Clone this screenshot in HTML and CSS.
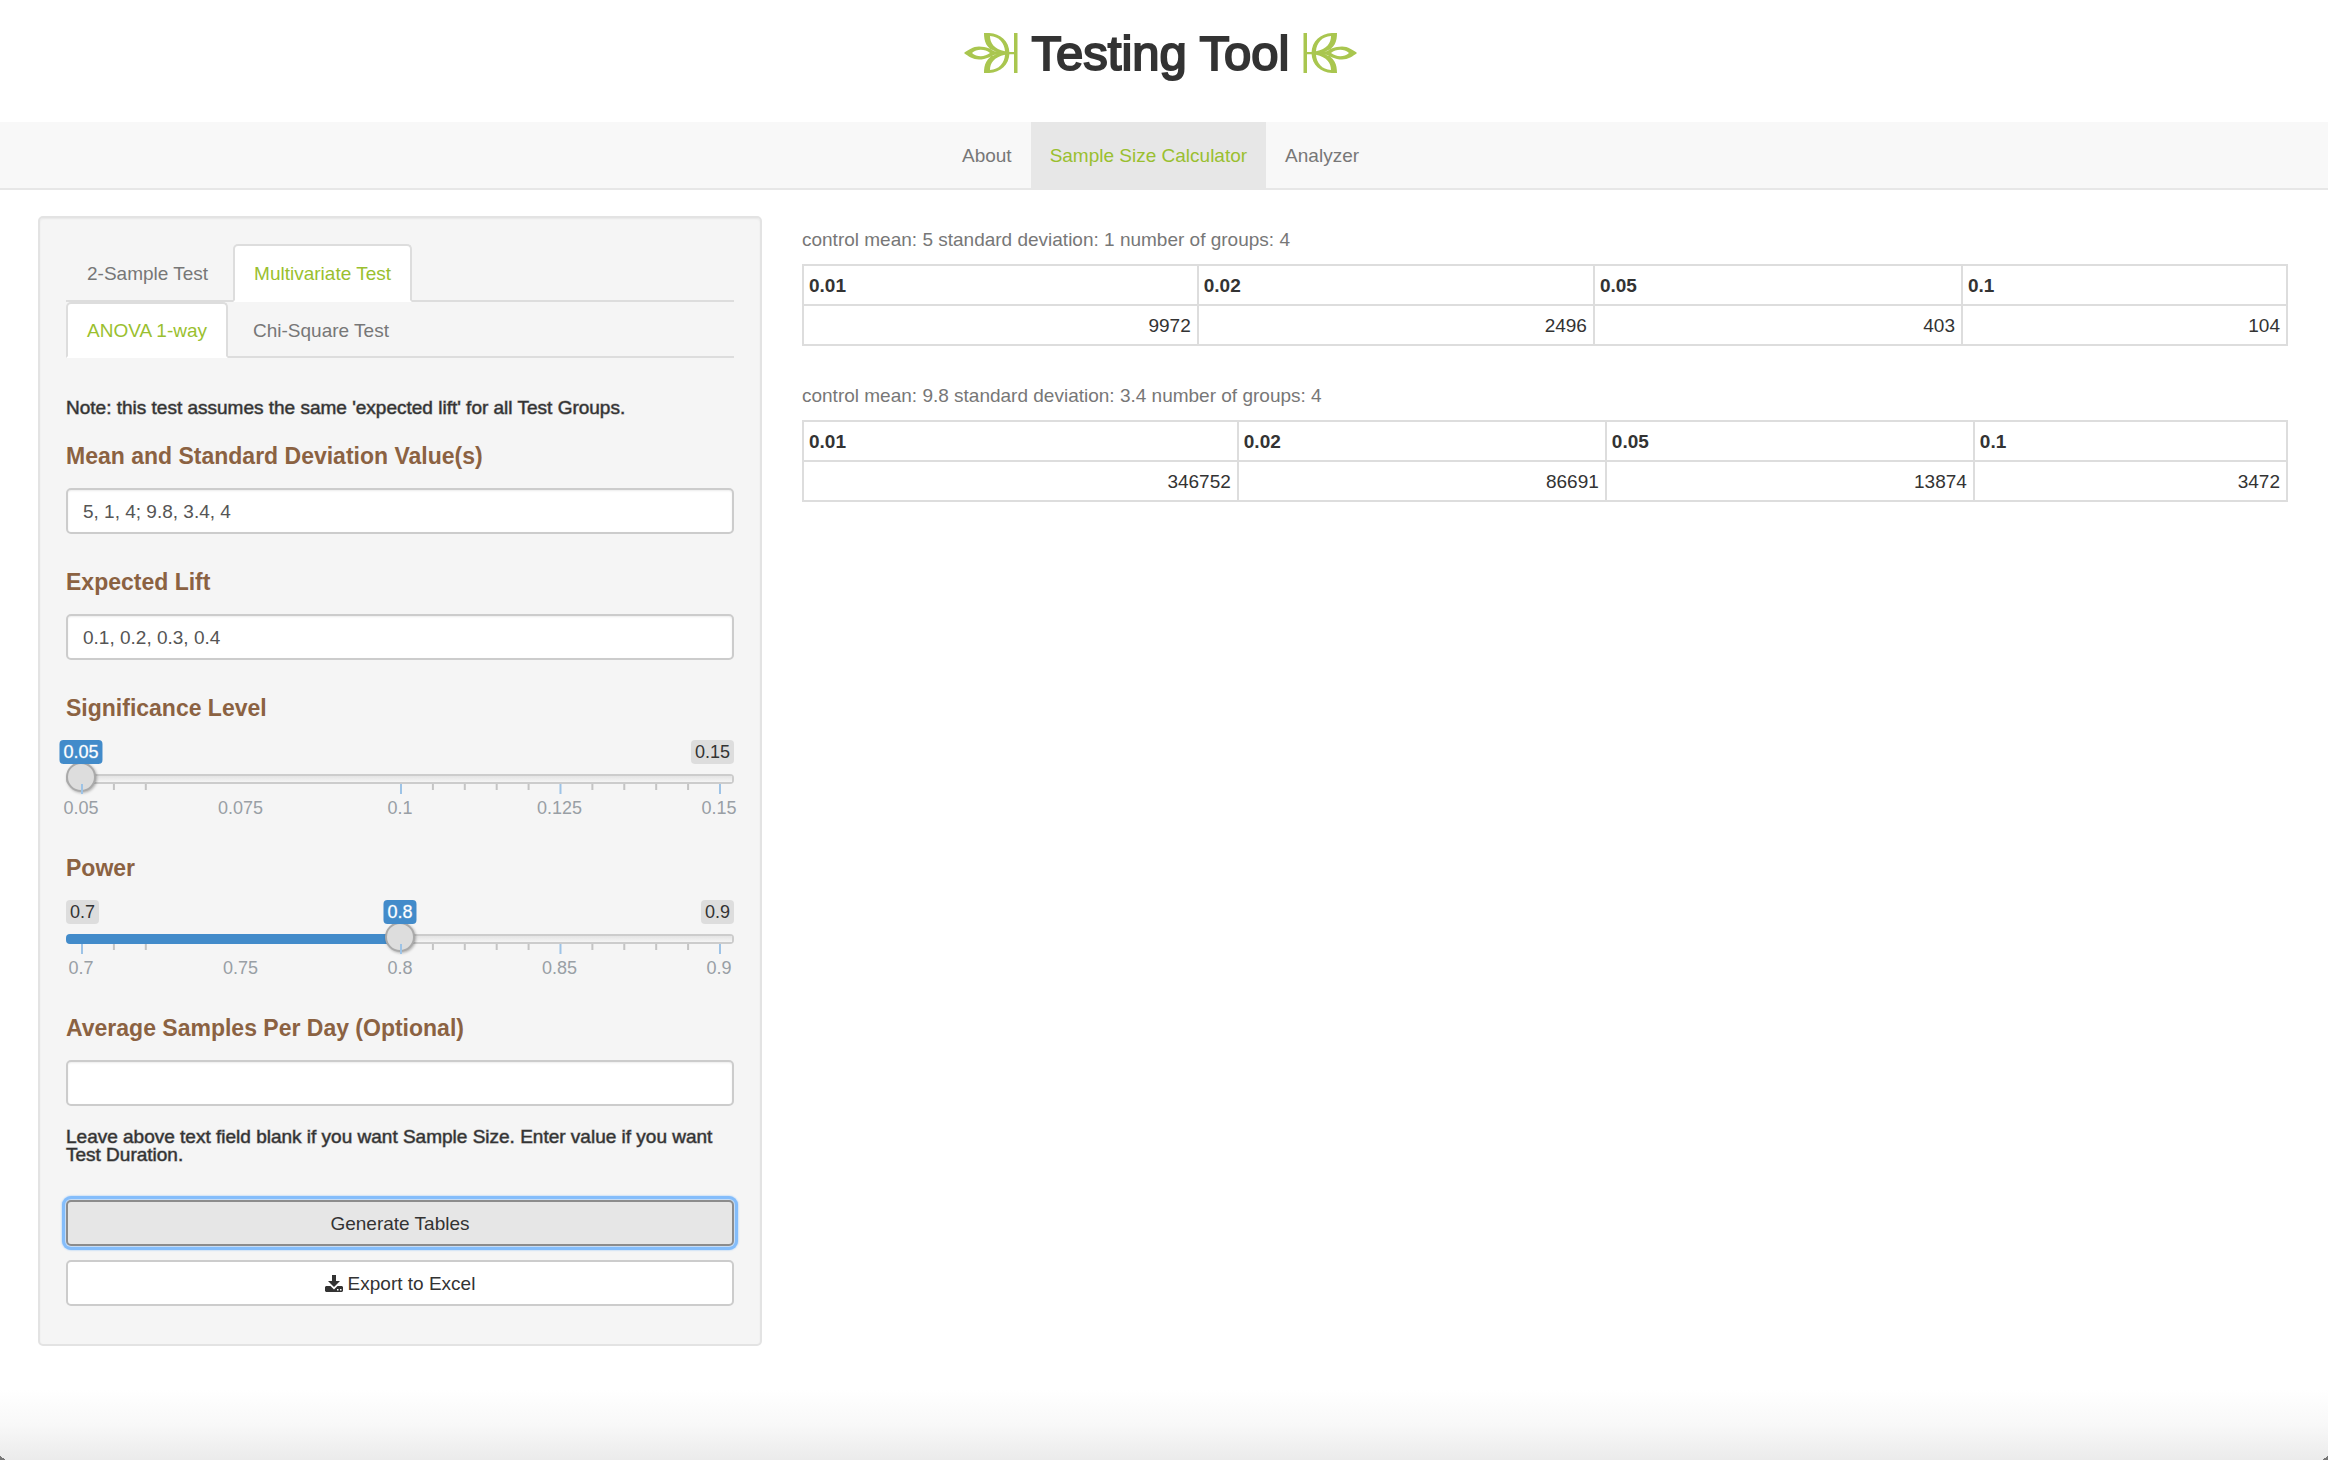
FILE: index.html
```
<!DOCTYPE html>
<html lang="en">
<head>
<meta charset="utf-8">
<meta name="viewport" content="width=device-width, initial-scale=1">
<title>Testing Tool</title>
<link rel="stylesheet" href="styles.css">
</head>
<body>
<svg class="sprite" aria-hidden="true">
  <symbol id="sprig" viewBox="0 0 54 40">
    <path fill-rule="evenodd" d="M20 0C34 -1 45 6 45.5 20C45 34 34 41 20 40C20 32 22 24 33 20.7C28 23 22 26.500 15 26.500C9 26.500 4 23 0 20C4 17 9 13.500 15 13.500C22 13.500 28 16.500 33 19.300C22 16 20 8 20 0ZM26 3C26 10 30 16 41 18.300C40.500 10 35 3.500 26 3ZM26 37C35 36.500 40.500 30 41 21.700C30 24 26 30 26 37ZM8 20C13 24.500 21 24 26 20C21 16 13 15.500 8 20Z"/>
    <path d="M29 19H51V21.200H29ZM50 0H53.500V40H50Z"/>
  </symbol>
</svg>

<header class="masthead">
  <svg class="sprig" aria-hidden="true"><use href="#sprig"/></svg>
  <h1 class="title">Testing Tool</h1>
  <svg class="sprig" viewBox="0 0 54 40" aria-hidden="true"><g transform="translate(54 0) scale(-1 1)"><use href="#sprig" width="54" height="40"/></g></svg>
</header>

<nav class="navbar">
  <a class="nav-link" href="#about">About</a>
  <a class="nav-link is-active" href="#calculator">Sample Size Calculator</a>
  <a class="nav-link" href="#analyzer">Analyzer</a>
</nav>

<main class="layout">
  <form class="well">
    <nav class="tabs">
      <a class="tab" href="#two-sample">2-Sample Test</a>
      <a class="tab is-active" href="#multivariate">Multivariate Test</a>
    </nav>
    <nav class="tabs tabs-sub">
      <a class="tab is-active" href="#anova">ANOVA 1-way</a>
      <a class="tab" href="#chi-square">Chi-Square Test</a>
    </nav>

    <p class="note note-top">Note: this test assumes the same 'expected lift' for all Test Groups.</p>

    <div class="field">
      <label class="label" for="means">Mean and Standard Deviation Value(s)</label>
      <input class="control" id="means" type="text" value="5, 1, 4; 9.8, 3.4, 4">
    </div>

    <div class="field">
      <label class="label" for="lift">Expected Lift</label>
      <input class="control" id="lift" type="text" value="0.1, 0.2, 0.3, 0.4">
    </div>

    <div class="field">
      <label class="label" for="significance">Significance Level</label>
      <div class="slider" style="--pos: 0">
        <div class="slider-ends"><span class="badge badge-end">0.15</span></div>
        <output class="badge badge-value" for="significance">0.05</output>
        <input class="range" id="significance" type="range" min="0.05" max="0.15" step="0.005" value="0.05">
        <svg class="ticks" aria-hidden="true">
          <g class="tick-minor"><rect x="5%" width="2" height="6"/><rect x="10%" width="2" height="6"/><rect x="55%" width="2" height="6"/><rect x="60%" width="2" height="6"/><rect x="65%" width="2" height="6"/><rect x="70%" width="2" height="6"/><rect x="80%" width="2" height="6"/><rect x="85%" width="2" height="6"/><rect x="90%" width="2" height="6"/><rect x="95%" width="2" height="6"/></g>
          <g class="tick-major"><rect x="0%" width="2" height="10"/><rect x="50%" width="2" height="10"/><rect x="75%" width="2" height="10"/><rect x="100%" width="2" height="10"/></g>
        </svg>
        <div class="scale"><span>0.05</span><span>0.075</span><span>0.1</span><span>0.125</span><span>0.15</span></div>
      </div>
    </div>

    <div class="field">
      <label class="label" for="power">Power</label>
      <div class="slider" style="--pos: 0.5">
        <div class="slider-ends"><span class="badge">0.7</span><span class="badge badge-end">0.9</span></div>
        <output class="badge badge-value" for="power">0.8</output>
        <input class="range" id="power" type="range" min="0.7" max="0.9" step="0.01" value="0.8">
        <svg class="ticks" aria-hidden="true">
          <g class="tick-minor"><rect x="5%" width="2" height="6"/><rect x="10%" width="2" height="6"/><rect x="55%" width="2" height="6"/><rect x="60%" width="2" height="6"/><rect x="65%" width="2" height="6"/><rect x="70%" width="2" height="6"/><rect x="80%" width="2" height="6"/><rect x="85%" width="2" height="6"/><rect x="90%" width="2" height="6"/><rect x="95%" width="2" height="6"/></g>
          <g class="tick-major"><rect x="0%" width="2" height="10"/><rect x="50%" width="2" height="10"/><rect x="75%" width="2" height="10"/><rect x="100%" width="2" height="10"/></g>
        </svg>
        <div class="scale"><span>0.7</span><span>0.75</span><span>0.8</span><span>0.85</span><span>0.9</span></div>
      </div>
    </div>

    <div class="field field-last">
      <label class="label" for="samples">Average Samples Per Day (Optional)</label>
      <input class="control" id="samples" type="text">
    </div>

    <p class="note">Leave above text field blank if you want Sample Size. Enter value if you want Test Duration.</p>

    <div class="actions">
      <button class="btn is-focused" type="button">Generate Tables</button>
      <button class="btn" type="button">
        <svg class="icon" viewBox="0 0 18 18" aria-hidden="true"><path fill-rule="evenodd" d="M7 0H11V6H15L9 12L3 6H7ZM1 11H5.500L9 14.500L12.500 11H17L18 12V16L17 17H1L0 16V12ZM12 14V15.500H13.500V14ZM15 14V15.500H16.500V14Z"/></svg>
        Export to Excel
      </button>
    </div>
  </form>

  <section class="results">
    <p class="caption" id="cap-1">control mean: 5 standard deviation: 1 number of groups: 4</p>
    <table class="table table-first" aria-labelledby="cap-1">
      <thead><tr><th>0.01</th><th>0.02</th><th>0.05</th><th>0.1</th></tr></thead>
      <tbody><tr><td>9972</td><td>2496</td><td>403</td><td>104</td></tr></tbody>
    </table>
    <p class="caption" id="cap-2">control mean: 9.8 standard deviation: 3.4 number of groups: 4</p>
    <table class="table table-second" aria-labelledby="cap-2">
      <thead><tr><th>0.01</th><th>0.02</th><th>0.05</th><th>0.1</th></tr></thead>
      <tbody><tr><td>346752</td><td>86691</td><td>13874</td><td>3472</td></tr></tbody>
    </table>
  </section>
</main>
</body>
</html>
```
FILE: styles.css
```
*, *::before, *::after { box-sizing: border-box; }

body {
  margin: 0;
  min-height: 100vh;
  font: 19px/26px "Liberation Sans", Arial, sans-serif;
  color: #333;
  background:
    linear-gradient(to top right, #777 50%, transparent 50%) left bottom / 6px 4px no-repeat,
    linear-gradient(to top left, #777 50%, transparent 50%) right bottom / 6px 4px no-repeat,
    linear-gradient(#fff, #f8f8f8 50%, #ebebeb) left bottom / 100% 70px no-repeat,
    #fff;
}

a { color: #777; text-decoration: none; }
a.is-active { color: #9abf2f; }

.sprite { position: absolute; width: 0; height: 0; }

.masthead {
  display: flex;
  justify-content: center;
  align-items: center;
  gap: 14px;
  padding: 27px 7px 43px 0;
}
.title {
  margin: 0;
  font-size: 49px;
  line-height: 52px;
  font-weight: 400;
  -webkit-text-stroke: 2px #333;
}
.sprig { width: 54px; height: 40px; fill: #a9c64f; }

.navbar {
  display: flex;
  justify-content: center;
  padding-right: 7px;
  background: #f8f8f8;
  border-bottom: 2px solid #e7e7e7;
}
.nav-link { padding: 21px 19px 19px; }
.nav-link.is-active { background: #e7e7e7; }

.layout {
  display: grid;
  grid-template-columns: calc((100% - 78px) / 3) minmax(0, 1fr);
  gap: 40px;
  align-items: start;
  padding: 26px 40px 26px 38px;
}

.well {
  padding: 26px 26px 38px;
  background: #f5f5f5;
  border: 2px solid #e3e3e3;
  border-radius: 5px;
  box-shadow: inset 0 1px 2px rgba(0, 0, 0, .06);
}

.tabs { display: flex; border-bottom: 2px solid #ddd; }
.tab {
  margin: 0 4px -2px 0;
  padding: 15px 19px 13px;
  border: 2px solid transparent;
  border-radius: 5px 5px 0 0;
}
.tab.is-active { background: #fff; border-color: #ddd #ddd #fff; }
.tabs-sub .tab { padding: 14px 19px 12px; }

.note {
  margin: 0;
  font-size: 19px;
  line-height: 18px;
  -webkit-text-stroke: 1px rgba(51, 51, 51, .5);
}
.note-top { margin: 41px 0 26px; }

.field { margin-bottom: 35px; }
.field-last { margin-bottom: 22px; }
.label {
  display: block;
  margin-bottom: 19px;
  font-size: 23px;
  line-height: 26px;
  font-weight: 700;
  color: #8b6242;
}
.control {
  display: block;
  width: 100%;
  height: 46px;
  padding: 1px 15px 0;
  font: inherit;
  color: #555;
  background: #fff;
  border: 2px solid #ccc;
  border-radius: 5px;
  box-shadow: inset 0 1px 2px rgba(0, 0, 0, .08);
}

.slider { position: relative; font-size: 18px; line-height: 24px; }
.slider-ends { display: flex; margin-bottom: 10px; }
.badge { padding: 1px 4px 0; line-height: 23px; background: #ddd; border-radius: 4px; }
.badge-end { margin-left: auto; }
.badge-value {
  position: absolute;
  top: 0;
  left: calc(15px + (100% - 30px) * var(--pos));
  transform: translateX(-50%);
  color: #fff;
  background: #428bca;
  -webkit-text-stroke: 1px rgba(255, 255, 255, .3);
}
.range {
  appearance: none;
  display: block;
  width: 100%;
  height: 10px;
  margin: 0;
  background: none;
}
.range::-webkit-slider-runnable-track {
  height: 10px;
  background:
    linear-gradient(#428bca, #428bca) left / calc(100% * var(--pos)) 100% no-repeat,
    linear-gradient(#e4e4e4, #f5f5f5) center / calc(100% - 4px) 6px no-repeat,
    #ccc;
  border-radius: 4px;
}
.range::-webkit-slider-thumb {
  appearance: none;
  width: 30px;
  height: 30px;
  margin-top: -12px;
  background: #ddd;
  border: 2px solid #aaa;
  border-radius: 50%;
  box-shadow: 1px 1px 3px rgba(0, 0, 0, .3);
}
.ticks {
  display: block;
  width: calc(100% - 30px);
  height: 12px;
  margin: 0 15px;
  overflow: visible;
}
.tick-minor { fill: #c4c4c4; }
.tick-major { fill: #9dc3e6; }
.scale {
  display: flex;
  justify-content: space-between;
  margin: 0 15px;
  color: #999fa5;
}
.scale span { display: flex; justify-content: center; width: 0; }

.actions { display: grid; gap: 14px; margin-top: 36px; }
.btn {
  display: flex;
  justify-content: center;
  align-items: center;
  gap: 5px;
  width: 100%;
  height: 46px;
  padding: 1px 15px 0;
  font: inherit;
  color: #333;
  background: #fff;
  border: 2px solid #ccc;
  border-radius: 5px;
}
.btn.is-focused {
  background: #e6e6e6;
  border-color: #8c8c8c;
  box-shadow: 0 0 0 1px #c5dcf5, 0 0 0 4px #84bdfb, 0 0 2px 4px #84bdfb;
}
.icon { width: 18px; height: 18px; fill: #333; }

.results { padding-top: 11px; }
.caption { margin: 0 0 11px; color: #777; }
.table {
  width: 100%;
  margin-bottom: 37px;
  border-collapse: collapse;
  table-layout: fixed;
}
.table th, .table td { padding: 7px 6px 5px; border: 2px solid #ddd; }
.table th { padding-left: 5px; text-align: left; }
.table td { text-align: right; }
.table-first th:nth-child(1) { width: 26.6%; }
.table-first th:nth-child(2) { width: 26.7%; }
.table-first th:nth-child(3) { width: 24.8%; }
.table-second th:nth-child(1) { width: 29.3%; }
.table-second th:nth-child(2) { width: 24.8%; }
.table-second th:nth-child(3) { width: 24.8%; }
```
